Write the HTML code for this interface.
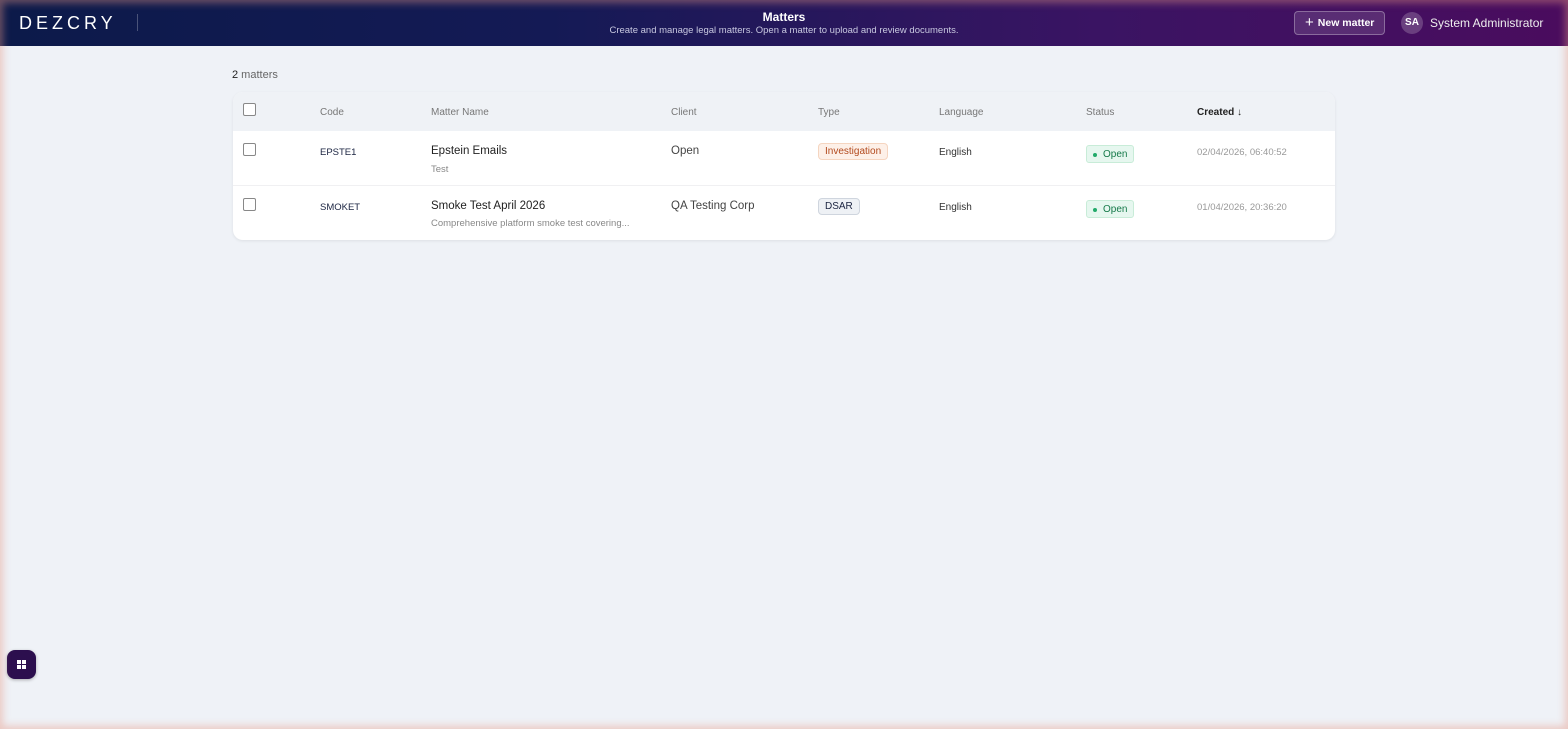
<!DOCTYPE html>
<html><head><meta charset="utf-8"><style>
*{box-sizing:border-box;margin:0;padding:0}
body{width:1568px;height:729px;overflow:hidden;background:#eff2f7;font-family:"Liberation Sans",sans-serif;position:relative}
.glow{position:absolute;inset:0;pointer-events:none;box-shadow:inset 0 0 8px 3px rgba(230,150,130,.45);z-index:10}
header{position:absolute;left:0;top:0;width:1568px;height:46px;background:linear-gradient(90deg,#0c1a4a 0%,#141a55 35%,#3a1463 70%,#4a0c5e 100%);color:#fff}
.logo{position:absolute;left:19px;top:13px;font-size:18px;letter-spacing:4px;font-weight:300;color:#fff}
.sep{position:absolute;left:137px;top:14px;width:1px;height:17px;background:rgba(255,255,255,.25)}
.title{position:absolute;left:0;width:1568px;top:10px;text-align:center;font-size:12px;font-weight:bold}
.sub{position:absolute;left:0;width:1568px;top:25px;text-align:center;font-size:9.5px;color:#c8c8e0}
.btn{position:absolute;left:1294px;top:11px;width:91px;height:24px;border:1px solid rgba(255,255,255,.3);background:rgba(255,255,255,.12);border-radius:4px;font-size:10.5px;font-weight:bold;line-height:22px;padding-left:10px}
.btn span{font-size:15px;font-weight:normal;vertical-align:-1px;margin-right:4px}
.av{position:absolute;left:1401px;top:12px;width:22px;height:22px;border-radius:50%;background:rgba(255,255,255,.2);font-size:10px;font-weight:bold;text-align:center;line-height:22px}
.un{position:absolute;left:1430px;top:16px;font-size:12px;color:#eee}
.count{position:absolute;left:232px;top:69px;font-size:11px;color:#666}
.count b{color:#222;font-weight:normal}
.card{position:absolute;left:233px;top:92px;width:1102px;height:148px;background:#fff;border-radius:10px;box-shadow:0 1px 3px rgba(0,0,0,.08);overflow:hidden}
.hd{height:39px;background:#eff2f6;position:relative}
.row{position:absolute;left:0;width:1102px;height:55px;border-bottom:1px solid #f0f0f2}
.t{position:absolute;font-size:10px;color:#777}
.cb{position:absolute;left:10px;width:13px;height:13px;border:1px solid #888;border-radius:2px;background:#fff}
.code{position:absolute;left:87px;font-size:9.5px;color:#1a2340}
.nm{position:absolute;left:198px;font-size:11.5px;color:#222}
.ds{position:absolute;left:198px;font-size:9.5px;color:#888}
.cl{position:absolute;left:438px;font-size:11.5px;color:#444}
.ty{position:absolute;left:585px;font-size:10px;padding:2px 6px;border-radius:4px}
.lg{position:absolute;left:706px;font-size:10px;color:#333}
.st{position:absolute;left:853px;font-size:10px;color:#167a4a;background:#e6f7ef;border:1px solid #c8ecd8;border-radius:3px;padding:3px 6px 2px 16px}
.st:before{content:"";position:absolute;left:6px;top:7px;width:4px;height:4px;border-radius:50%;background:#22aa6a}
.dt{position:absolute;left:964px;font-size:9.5px;color:#999}
.fab{position:absolute;left:7px;top:650px;width:29px;height:29px;border-radius:8px;background:#2c0f4e;box-shadow:0 1px 3px rgba(0,0,0,.3)}
.fab i{position:absolute;width:3.5px;height:3.5px;background:#fff}
</style></head><body>
<header>
<div class="logo">DEZCRY</div><div class="sep"></div>
<div class="title">Matters</div>
<div class="sub">Create and manage legal matters. Open a matter to upload and review documents.</div>
<div class="btn"><span>+</span>New matter</div>
<div class="av">SA</div><div class="un">System Administrator</div>
</header>
<div class="count"><b>2</b> matters</div>
<div class="card">
<div class="hd">
<div class="cb" style="top:11px"></div>
<div class="t" style="left:87px;top:15px">Code</div>
<div class="t" style="left:198px;top:15px">Matter Name</div>
<div class="t" style="left:438px;top:15px">Client</div>
<div class="t" style="left:585px;top:15px">Type</div>
<div class="t" style="left:706px;top:15px">Language</div>
<div class="t" style="left:853px;top:15px">Status</div>
<div class="t" style="left:964px;top:15px;color:#222;font-weight:bold">Created ↓</div>
</div>
<div class="row" style="top:39px">
<div class="cb" style="top:12px"></div>
<div class="code" style="top:16px">EPSTE1</div>
<div class="nm" style="top:14px">Epstein Emails</div>
<div class="ds" style="top:33px">Test</div>
<div class="cl" style="top:14px">Open</div>
<div class="ty" style="top:12px;color:#b24a1e;background:#fdf0e8;border:1px solid #f5d5c0">Investigation</div>
<div class="lg" style="top:16px">English</div>
<div class="st" style="top:14px">Open</div>
<div class="dt" style="top:16px">02/04/2026, 06:40:52</div>
</div>
<div class="row" style="top:94px;border:none">
<div class="cb" style="top:12px"></div>
<div class="code" style="top:16px">SMOKET</div>
<div class="nm" style="top:14px">Smoke Test April 2026</div>
<div class="ds" style="top:32px">Comprehensive platform smoke test covering...</div>
<div class="cl" style="top:14px">QA Testing Corp</div>
<div class="ty" style="top:12px;color:#1a2340;background:#eef1f5;border:1px solid #cfd5de">DSAR</div>
<div class="lg" style="top:16px">English</div>
<div class="st" style="top:14px">Open</div>
<div class="dt" style="top:16px">01/04/2026, 20:36:20</div>
</div>
</div>
<div class="fab"><i style="left:10px;top:10px"></i><i style="left:15px;top:10px"></i><i style="left:10px;top:15px"></i><i style="left:15px;top:15px"></i></div>
<div class="glow"></div>
</body></html>
